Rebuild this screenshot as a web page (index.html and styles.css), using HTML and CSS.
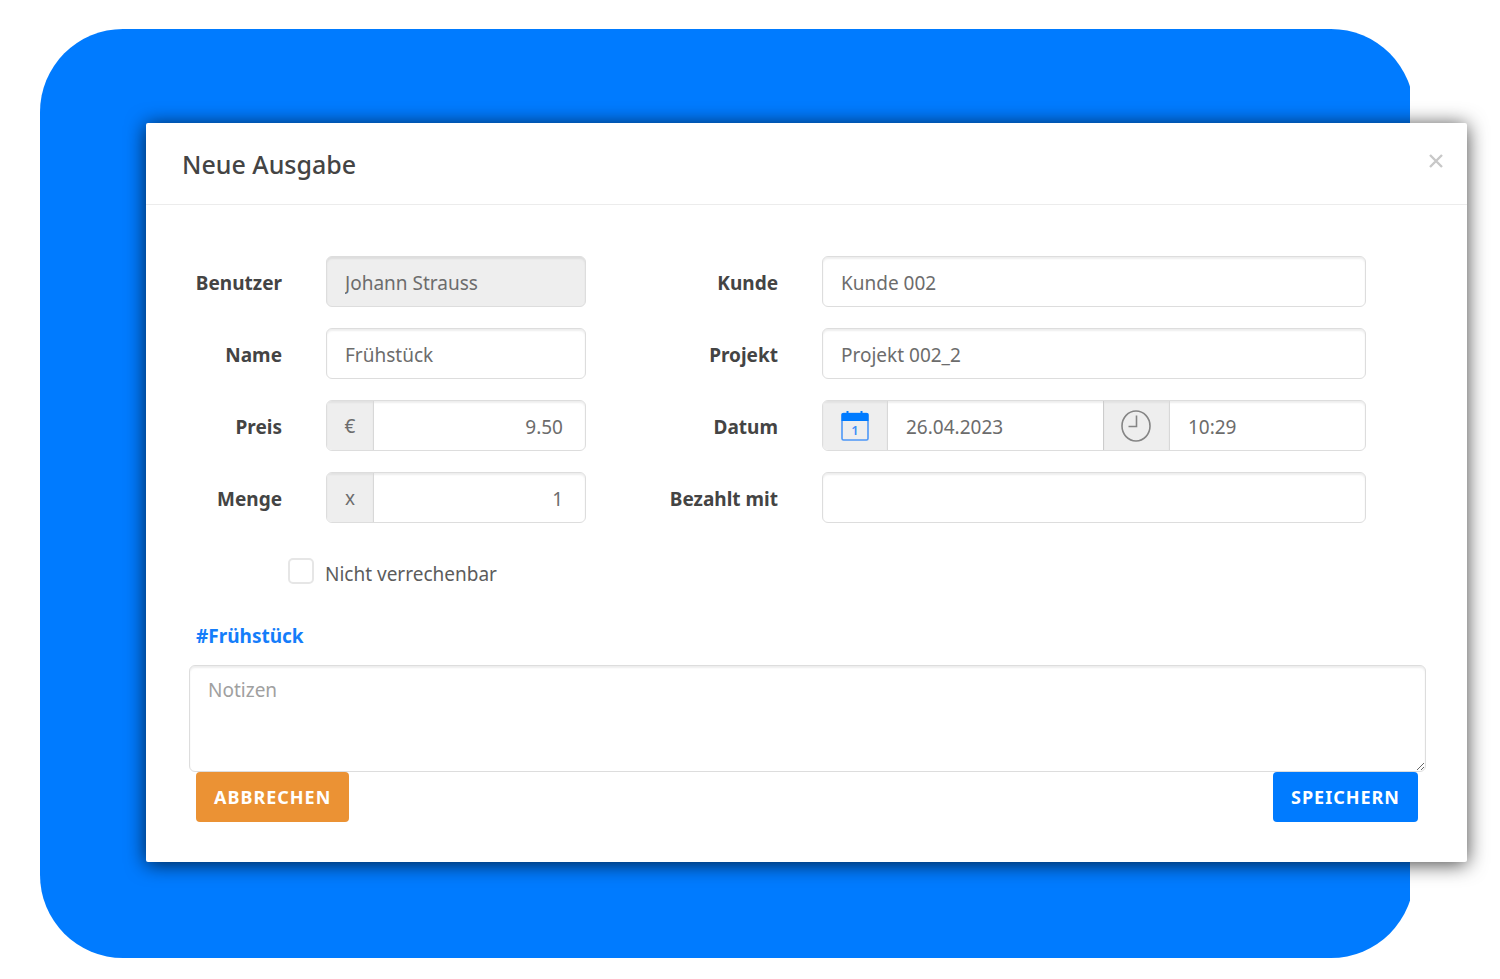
FILE: index.html
```html
<!DOCTYPE html>
<html lang="de">
<head>
    <meta charset="UTF-8">
    <title>Neue Ausgabe</title>
    <link rel="stylesheet" href="styles.css">
</head>
<body>

    <main class="stage">
        <div class="backdrop"></div>

        <section class="modal" role="dialog" aria-labelledby="modal_title">
            <header class="modal-header">
                <h1 id="modal_title">Neue Ausgabe</h1>
                <button class="close" type="button" aria-label="Schließen">
                    <svg width="14" height="14" viewBox="0 0 14 14"><path d="M1 1l12 12M13 1L1 13" fill="none" stroke="#c8c8c8" stroke-width="2.4"/></svg>
                </button>
            </header>

            <form class="modal-body">
                <div class="fields">
                    <label for="user">Benutzer</label>
                    <input class="control" id="user" type="text" value="Johann Strauss" disabled>
                    <label for="customer">Kunde</label>
                    <input class="control" id="customer" type="text" value="Kunde 002">

                    <label for="name">Name</label>
                    <input class="control" id="name" type="text" value="Frühstück">
                    <label for="project">Projekt</label>
                    <input class="control" id="project" type="text" value="Projekt 002_2">

                    <label for="price">Preis</label>
                    <div class="group">
                        <span class="addon">€</span>
                        <input class="number" id="price" type="text" value="9.50">
                    </div>
                    <label for="date">Datum</label>
                    <div class="group">
                        <span class="addon icon">
                            <svg width="28" height="30" viewBox="0 0 28 30">
                                <rect x="1" y="2.5" width="26" height="26.5" rx="1.5" fill="none" stroke="#4c97f7" stroke-width="1.6"/>
                                <path d="M0.5 3.5a1.5 1.5 0 0 1 1.5-1.5h24a1.5 1.5 0 0 1 1.5 1.5v6.5h-27z" fill="#007bff"/>
                                <path d="M6.5 0v3M20.5 0v3" stroke="#007bff" stroke-width="2"/>
                                <text x="14" y="24" text-anchor="middle">1</text>
                            </svg>
                        </span>
                        <input class="date" id="date" type="text" value="26.04.2023">
                        <span class="addon icon">
                            <svg width="30" height="32" viewBox="0 0 30 32">
                                <ellipse cx="15" cy="16" rx="14" ry="15" fill="none" stroke="#858585" stroke-width="1.6"/>
                                <path d="M15.5 5.5v11h-8" fill="none" stroke="#858585" stroke-width="1.6"/>
                            </svg>
                        </span>
                        <input class="time" type="text" value="10:29" aria-label="Uhrzeit">
                    </div>

                    <label for="amount">Menge</label>
                    <div class="group">
                        <span class="addon">x</span>
                        <input class="number" id="amount" type="text" value="1">
                    </div>
                    <label for="paid_with">Bezahlt mit</label>
                    <input class="control" id="paid_with" type="text">
                </div>

                <div class="check">
                    <input id="not_billable" type="checkbox">
                    <label for="not_billable">Nicht verrechenbar</label>
                </div>

                <a class="tag" href="#">#Frühstück</a>

                <textarea class="notes" placeholder="Notizen" aria-label="Notizen"></textarea>

                <div class="actions">
                    <button class="btn cancel" type="button">ABBRECHEN</button>
                    <button class="btn save" type="button">SPEICHERN</button>
                </div>
            </form>
        </section>
    </main>

</body>
</html>
```
FILE: styles.css
```css
* {
    box-sizing: border-box;
}

body {
    margin: 0;
    background: #fff;
    color: #444;
    font-family: 'Segoe UI', 'Noto Sans', sans-serif;
    font-size: 19px;
}

input, textarea, button {
    font: inherit;
}

/* backdrop and modal share one grid cell */
.stage {
    display: grid;
    padding: 29px 33px 21px 40px;
}

.backdrop, .modal {
    grid-area: 1 / 1;
}

.backdrop {
    margin-right: 53px;
    border-radius: 83px;
    background: #007bff;
    clip-path: inset(0 4px 0 0);
}

.modal {
    z-index: 1;
    margin: 94px 0 96px 106px;
    border-radius: 2px;
    background: #fff;
    box-shadow: 0 2px 20px rgba(0, 0, 0, 0.75);
}

.modal-header {
    display: flex;
    justify-content: space-between;
    align-items: flex-start;
    height: 82px;
    padding: 24px 23px 0 36px;
    border-bottom: 1px solid #ececec;
}

.modal-header h1 {
    margin: 0;
    font-size: 25px;
    font-weight: 500;
    line-height: 34px;
}

.close {
    display: flex;
    margin-top: 6px;
    padding: 1px;
    border: 0;
    background: none;
    cursor: pointer;
}

.modal-body {
    padding: 51px 41px 40px 43px;
}

.fields {
    display: grid;
    grid-template-columns: 137fr 260fr 236fr 544fr;
    grid-auto-rows: 51px;
    row-gap: 21px;
    align-items: center;
    padding-right: 60px;
}

.fields label {
    padding: 2px 44px 0 0;
    font-weight: 700;
    text-align: right;
    white-space: nowrap;
}

.control, .group, .notes {
    width: 100%;
    height: 51px;
    border: 1px solid #ddd;
    border-radius: 6px;
    background: #fff;
    box-shadow: inset 0 2px 2px rgba(0, 0, 0, 0.07);
    color: #6c6c6c;
}

.control {
    padding: 2px 18px 0;
}

.control:disabled {
    background: #eee;
}

.group {
    display: flex;
    overflow: hidden;
}

.group input {
    min-width: 0;
    padding: 2px 18px 0;
    border: 0;
    background: none;
    color: inherit;
}

.group .number {
    flex: 1;
    padding-right: 22px;
    text-align: right;
}

.group .date {
    flex: 217;
    width: 0;
}

.group .time {
    flex: 193;
    width: 0;
}

.addon {
    display: flex;
    flex: 0 0 47px;
    align-items: center;
    justify-content: center;
    border-right: 1px solid #d8d8d8;
    background: #eee;
    box-shadow: inset 0 2px 2px rgba(0, 0, 0, 0.05);
}

.addon.icon {
    flex-basis: 65px;
}

.addon text {
    fill: #3f8ff7;
    font-size: 13px;
    font-weight: 600;
}

.date + .addon.icon {
    flex-basis: 67px;
    border-left: 1px solid #ccc;
}

.check {
    display: flex;
    gap: 11px;
    margin-top: 35px;
    padding-left: 99px;
    color: #5c5c5c;
    line-height: 32px;
}

.check input {
    width: 26px;
    height: 26px;
    margin: 0;
    border: 2px solid #e6e6e6;
    border-radius: 5px;
    appearance: none;
}

.check input:checked {
    background: #007bff;
}

.tag {
    display: block;
    width: fit-content;
    margin: 30px 0 13px 7px;
    color: #147dfa;
    font-weight: 700;
    line-height: 32px;
    text-decoration: none;
}

.notes {
    display: block;
    height: 107px;
    padding: 11px 18px;
    resize: vertical;
}

.notes::placeholder {
    color: #a0a0a0;
}

.actions {
    display: flex;
    justify-content: space-between;
    padding: 0 8px 0 7px;
}

.btn {
    height: 50px;
    padding: 0 18px;
    border: 0;
    border-radius: 4px;
    color: #fff;
    font-size: 18px;
    font-weight: 700;
    letter-spacing: 1px;
    cursor: pointer;
}

.cancel {
    background: #eb9234;
}

.save {
    background: #007bff;
}
```
